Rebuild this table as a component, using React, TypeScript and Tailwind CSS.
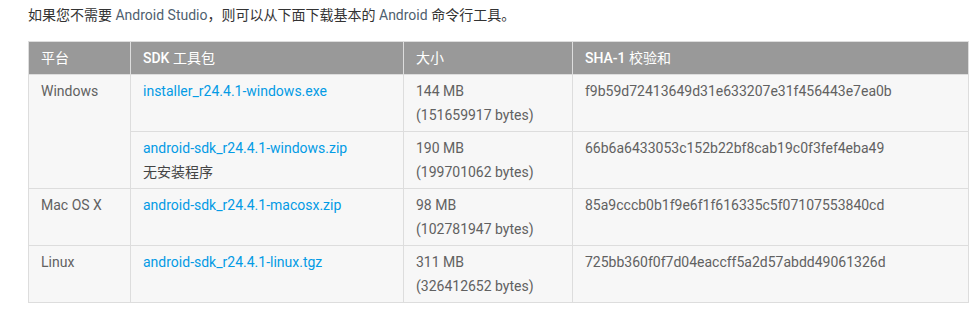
import React from "react"

type Row = {
    platform?: string
    span?: number
    file: string
    note?: string
    size: string
    bytes: string
    sha: string
}

const rows: Row[] = [
    {
        platform: "Windows",
        span: 2,
        file: "installer_r24.4.1-windows.exe",
        size: "144 MB",
        bytes: "(151659917 bytes)",
        sha: "f9b59d72413649d31e633207e31f456443e7ea0b",
    },
    {
        file: "android-sdk_r24.4.1-windows.zip",
        note: "无安装程序",
        size: "190 MB",
        bytes: "(199701062 bytes)",
        sha: "66b6a6433053c152b22bf8cab19c0f3fef4eba49",
    },
    {
        platform: "Mac OS X",
        file: "android-sdk_r24.4.1-macosx.zip",
        size: "98 MB",
        bytes: "(102781947 bytes)",
        sha: "85a9cccb0b1f9e6f1f616335c5f07107553840cd",
    },
    {
        platform: "Linux",
        file: "android-sdk_r24.4.1-linux.tgz",
        size: "311 MB",
        bytes: "(326412652 bytes)",
        sha: "725bb360f0f7d04eaccff5a2d57abdd49061326d",
    },
]

export default function App() {
    const td = "border border-[#dddddd] px-3 pt-1 pb-1 align-top"
    const th = "border border-[#dddddd] px-3 h-[33px] text-left font-normal text-white"

    return (
        <div
            className="w-[976px] h-[312px] bg-white pl-[28px] pt-[3px] text-[14px] leading-[24px] text-[#555]"
            style={{ fontFamily: 'Roboto, "Noto Sans CJK SC", sans-serif' }}
        >
            <p className="text-[#333]">
                如果您不需要 <span className="text-[#4f5f6f]">Android Studio</span>，则可以从下面下载基本的{" "}
                <span className="text-[#4f5f6f]">Android</span> 命令行工具。
            </p>

            <table className="mt-[14px] w-[940px] table-fixed border-collapse bg-[#f7f7f7] text-[#616161]">
                <colgroup>
                    <col className="w-[102px]" />
                    <col className="w-[273px]" />
                    <col className="w-[169px]" />
                    <col className="w-[396px]" />
                </colgroup>
                <thead>
                    <tr className="bg-[#999999]">
                        <th className={th}>平台</th>
                        <th className={th}>
                            <span className="font-medium">SDK</span> 工具包
                        </th>
                        <th className={th}>大小</th>
                        <th className={th}>
                            <span className="font-medium">SHA-1</span> 校验和
                        </th>
                    </tr>
                </thead>
                <tbody>
                    {rows.map((r) => (
                        <tr key={r.file} className="h-[57px]">
                            {r.platform && (
                                <td className={td} rowSpan={r.span ?? 1}>
                                    {r.platform}
                                </td>
                            )}
                            <td className={td}>
                                <a className="block text-[#039be5]">{r.file}</a>
                                {r.note && <div className="text-[#444]">{r.note}</div>}
                            </td>
                            <td className={td}>
                                <div>{r.size}</div>
                                <div>{r.bytes}</div>
                            </td>
                            <td className={td}>{r.sha}</td>
                        </tr>
                    ))}
                </tbody>
            </table>
        </div>
    )
}
